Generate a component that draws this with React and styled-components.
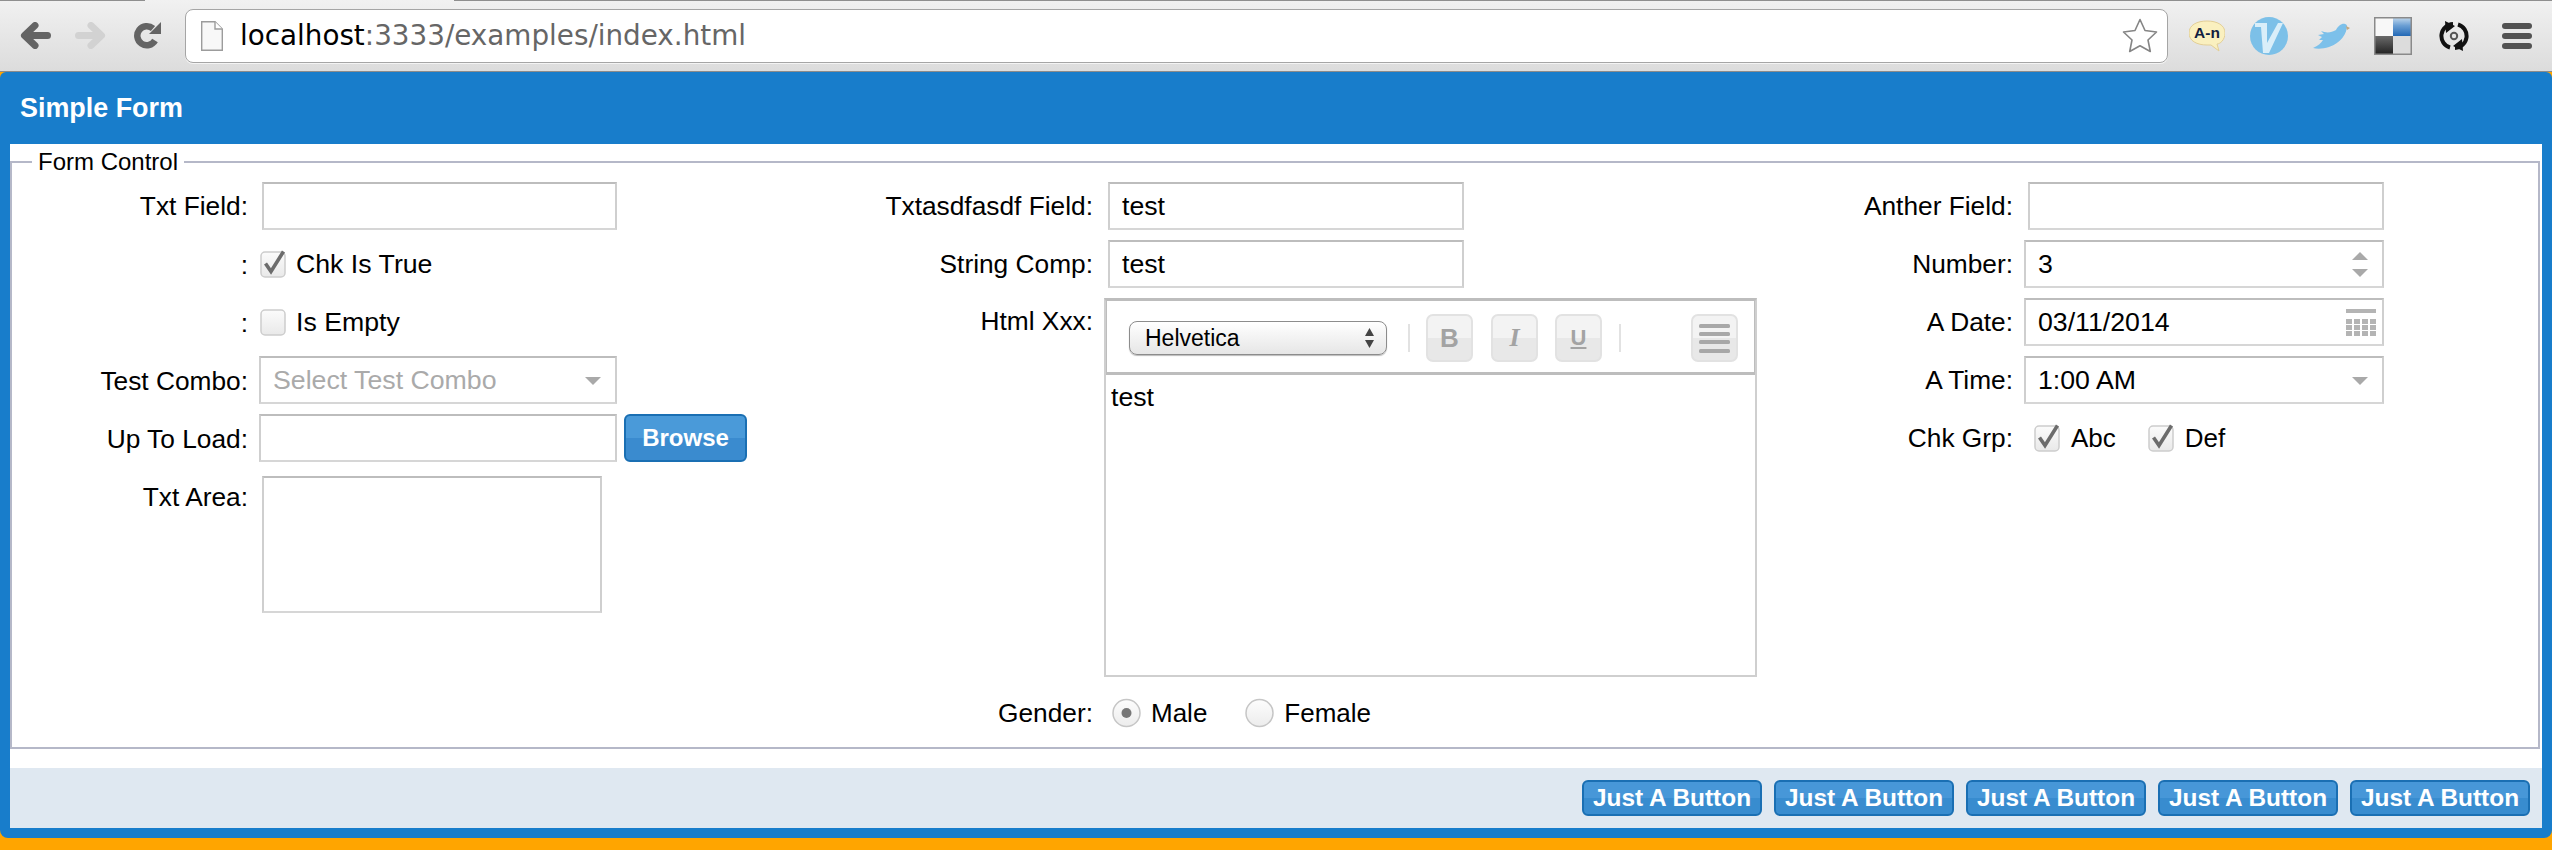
import styled, { createGlobalStyle } from "styled-components";

const GlobalStyle = createGlobalStyle`
  html, body {
    margin: 0;
    padding: 0;
    background: #ffa500;
    font-family: "Liberation Sans", Arial, sans-serif;
    font-size: 26.7px;
    color: #000;
  }
  * {
    box-sizing: border-box;
  }
`;

const Page = styled.div`
  display: flex;
  flex-direction: column;
  height: 850px;
  overflow: hidden;
`;

const BrowserBar = styled.div`
  display: flex;
  align-items: center;
  flex: 0 0 72px;
  padding: 0 20px;
  border-bottom: 1px solid #8b8b8b;
  background:
    linear-gradient(to right, #8f8f8f 145px, transparent 145px, transparent 454px, #8f8f8f 454px) top / 100% 1px no-repeat,
    linear-gradient(#f1f1f1, #dcdcdc);
`;

const Tool = styled.svg`
  flex: none;
  display: block;
  margin-left: ${(props) => props.$left || 0}px;
`;

const Omnibox = styled.div`
  display: flex;
  align-items: center;
  flex: 1;
  height: 54px;
  margin-left: 24px;
  padding: 0 9px 0 15px;
  background: #fff;
  border: 1px solid #a5a5a5;
  border-radius: 8px;
  box-shadow: 0 1px 0 #f4f4f4;
`;

const Url = styled.div`
  flex: 1;
  margin-left: 17px;
  font-family: "DejaVu Sans", sans-serif;
  font-size: 27.8px;
  color: #666;
  white-space: nowrap;

  > b {
    font-weight: 400;
    color: #000;
  }
`;

const Panel = styled.div`
  flex: 0 0 766px;
  display: flex;
  flex-direction: column;
  padding: 0 10px 10px;
  background: #187dcb;
  border-radius: 6px 6px 8px 8px;
`;

const PanelTitle = styled.div`
  flex: 0 0 72px;
  padding: 1px 0 0 10px;
  color: #fff;
  font-size: 26.9px;
  font-weight: 700;
  line-height: 71px;
`;

const PanelBody = styled.div`
  flex: 1;
  display: flex;
  flex-direction: column;
  background: #fff;
`;

const FormSet = styled.fieldset`
  margin: 0 2px 19px 0;
  padding: 2px 0 10px;
  min-width: 0;
  border: 2px solid #b5b8c8;

  > legend {
    margin-left: 20px;
    padding: 0 6px;
    font-size: 24px;
    line-height: 36px;
  }
`;

const Columns = styled.div`
  display: grid;
  grid-template-columns: 852px 921px 1fr;
`;

const Column = styled.div`
  display: flex;
  flex-direction: column;
  gap: 10px;
`;

const Row = styled.div`
  display: flex;
  align-items: ${(props) => (props.$top ? "flex-start" : "center")};
  min-height: 48px;
  margin-top: ${(props) => props.$gap || 0}px;
`;

const Label = styled.label`
  flex: none;
  width: ${(props) => props.$width}px;
  height: 48px;
  margin-right: 11px;
  font-size: 26.3px;
  text-align: right;
  white-space: nowrap;
  line-height: ${(props) => props.$line || 48}px;
`;

const Field = styled.div`
  display: flex;
  align-items: center;
  justify-content: space-between;
  width: ${(props) => props.$width}px;
  height: 48px;
  margin-left: ${(props) => props.$inset || 0}px;
  padding: 1px ${(props) => props.$right || 14}px 0 12px;
  background: #fff;
  border: 2px solid #cfcfcf;
  border-top-color: #bdbdbd;
  border-bottom-color: #d6d6d6;
  color: ${(props) => (props.$muted ? "#aaa" : "#000")};
  white-space: nowrap;
`;

const TextArea = styled(Field)`
  height: 137px;
`;

const Browse = styled.button`
  width: 123px;
  height: 48px;
  margin-left: 7px;
  padding: 0;
  font: 700 24px "Liberation Sans", Arial, sans-serif;
  color: #fff;
  background: linear-gradient(#4a9ad9 0 50%, #3a8bcf 50% 100%);
  border: 2px solid #1a6fb3;
  border-radius: 6px;
`;

const Editor = styled.div`
  display: flex;
  flex-direction: column;
  width: 653px;
  height: 379px;
  background: #fff;
  border: 2px solid #cfcfcf;
  border-top: 3px solid #bdbdbd;
`;

const EditorBar = styled.div`
  display: flex;
  align-items: center;
  flex: 0 0 74px;
  padding: 3px 0 0 22px;
  border-bottom: 3px solid #bdbdbd;
  border-left: 1px solid #bdbdbd;
  border-right: 1px solid #bdbdbd;
`;

const FontPicker = styled.div`
  display: flex;
  align-items: center;
  justify-content: space-between;
  width: 258px;
  height: 34px;
  padding: 0 12px 0 15px;
  font-size: 23px;
  background: linear-gradient(#fff, #e6e6e6);
  border: 1px solid #8c8c8c;
  border-radius: 8px;
  box-shadow: 0 1px 1px #bbb;
`;

const BarGap = styled.span`
  width: 2px;
  height: 28px;
  margin: 0 ${(props) => props.$after}px 0 ${(props) => props.$before}px;
  background: #e2e2e2;
`;

const BarButton = styled.div`
  display: flex;
  align-items: center;
  justify-content: center;
  width: 47px;
  height: 48px;
  margin-right: ${(props) => props.$gap || 0}px;
  color: #a3a3a3;
  font: ${(props) => props.$font};
  text-decoration: ${(props) => (props.$under ? "underline" : "none")};
  background: linear-gradient(#f3f3f3 0 50%, #e8e8e8 50% 100%);
  border: 2px solid #e2e2e2;
  border-radius: 7px;
`;

const EditorText = styled.div`
  padding: 7px 5px;
  line-height: 30px;
`;

const Option = styled.div`
  display: flex;
  align-items: center;
  gap: ${(props) => props.$gap || 9}px;
  margin-left: ${(props) => props.$left || 0}px;
  font-size: ${(props) => props.$size || 26.7}px;
  white-space: nowrap;
`;

const Footer = styled.div`
  flex: 1;
  display: flex;
  align-items: center;
  justify-content: flex-end;
  gap: 12px;
  padding-right: 12px;
  background: #dfe8f1;
`;

const FooterButton = styled.button`
  width: 180px;
  height: 36px;
  padding: 0;
  font: 700 24.4px/32px "Liberation Sans", Arial, sans-serif;
  color: #fff;
  background: linear-gradient(#4797d8 0 50%, #388ccf 50% 100%);
  border: 2px solid #1a6fb3;
  border-radius: 6px;
`;

const ComboArrow = () => (
  <svg width="16" height="8" viewBox="0 0 16 8">
    <path d="M0 0H16L8 8Z" fill="#a9a9a9" />
  </svg>
);

const SpinArrows = () => (
  <svg width="16" height="26" viewBox="0 0 16 26">
    <path d="M8 0L16 8H0Z" fill="#a9a9a9" />
    <path d="M0 17H16L8 25Z" fill="#a9a9a9" />
  </svg>
);

const CalendarIcon = () => {
  const cells = [];
  [10, 16, 22].forEach((y) =>
    [0, 8, 16, 24].forEach((x) => cells.push(<rect key={`${x}-${y}`} x={x} y={y} width="6" height="5" />))
  );
  return (
    <svg width="30" height="28" viewBox="0 0 30 28" fill="#b4b4b4">
      <rect x="0" y="0" width="30" height="4" />
      {cells}
    </svg>
  );
};

const CheckBox = ({ checked }) => (
  <svg width="27" height="28" viewBox="0 0 27 28">
    <defs>
      <linearGradient id="box" x1="0" y1="0" x2="0" y2="1">
        <stop offset="0" stopColor="#fbfbfb" />
        <stop offset="1" stopColor="#e9e9e9" />
      </linearGradient>
    </defs>
    <rect x="1" y="2" width="24" height="25" rx="4" fill="url(#box)" stroke="#cdcdcd" strokeWidth="1.5" />
    {checked && <path d="M5.5 13.5L11 21.5L23.5 1.5" fill="none" stroke="#6c6c6c" strokeWidth="3.6" />}
  </svg>
);

const RadioDot = ({ checked }) => (
  <svg width="29" height="30" viewBox="0 0 29 30">
    <defs>
      <linearGradient id="radio" x1="0" y1="0" x2="0" y2="1">
        <stop offset="0" stopColor="#fdfdfd" />
        <stop offset="1" stopColor="#ececec" />
      </linearGradient>
    </defs>
    <circle cx="14.5" cy="15" r="13.5" fill="url(#radio)" stroke="#c6c6c6" strokeWidth="1.5" />
    {checked && <circle cx="14.5" cy="15" r="5" fill="#777" />}
  </svg>
);

const UpDown = () => (
  <svg width="9" height="20" viewBox="0 0 9 20" fill="#444">
    <path d="M4.5 0L9 8H0Z" />
    <path d="M0 12H9L4.5 20Z" />
  </svg>
);

const JustifyIcon = () => (
  <svg width="31" height="29" viewBox="0 0 31 29" fill="#a8a8a8">
    <rect y="0" width="31" height="4" rx="1.5" />
    <rect y="8" width="31" height="4" rx="1.5" />
    <rect y="16" width="31" height="4" rx="1.5" />
    <rect y="25" width="31" height="4" rx="1.5" />
  </svg>
);

const App = () => {
  return (
    <Page>
      <GlobalStyle />
      <BrowserBar>
        <Tool width="31" height="27" viewBox="0 0 31 27">
          <path d="M27.5 13.5H7M15 3.5L4.5 13.5L15 23.5" fill="none" stroke="#646464" strokeWidth="7" strokeLinecap="round" strokeLinejoin="round" />
        </Tool>
        <Tool $left="24" width="31" height="27" viewBox="0 0 31 27">
          <path d="M3.5 13.5H24M16 3.5L26.5 13.5L16 23.5" fill="none" stroke="#d2d2d2" strokeWidth="7" strokeLinecap="round" strokeLinejoin="round" />
        </Tool>
        <Tool $left="28" width="27" height="27" viewBox="0 0 27 27">
          <path d="M21 18.5A9.5 9.5 0 1 1 19 6.5" fill="none" stroke="#646464" strokeWidth="6.5" />
          <path d="M27 0V12H15Z" fill="#646464" />
        </Tool>
        <Omnibox>
          <svg width="22" height="30" viewBox="0 0 22 30">
            <path d="M.7.7H14L21.3 8V29.3H.7Z" fill="#f8f8f8" stroke="#9c9c9c" strokeWidth="1.4" />
            <path d="M14 .7V8H21.3" fill="#fff" stroke="#9c9c9c" strokeWidth="1.4" />
          </svg>
          <Url>
            <b>localhost</b>:3333/examples/index.html
          </Url>
          <svg width="36" height="35" viewBox="0 0 36 35">
            <path d="M18 1.5L23 12.5L34.5 14L26 22L28.3 33.5L18 27.7L7.7 33.5L10 22L1.5 14L13 12.5Z" fill="#fff" stroke="#858585" strokeWidth="1.6" strokeLinejoin="round" />
          </svg>
        </Omnibox>
        <Tool $left="21" width="36" height="32" viewBox="0 0 36 32">
          <path d="M18 1C28 1 36 5 36 13C36 20 31 24 28 24L30 31L22 25H18C8 25 0 21 0 13C0 5 8 1 18 1Z" fill="#faf0bf" stroke="#e3cf96" />
          <text x="18" y="18" textAnchor="middle" fontFamily="Liberation Sans" fontSize="15.5" fontWeight="700" fill="#12213f">A-n</text>
        </Tool>
        <Tool $left="25" width="38" height="38" viewBox="0 0 38 38">
          <circle cx="19" cy="19" r="19" fill="#7cc0e8" />
          <path d="M5 6H17V26L28 6H33L19 36H13L11 10H5Z" fill="#d9eef9" />
        </Tool>
        <Tool $left="25" width="38" height="26" viewBox="0 0 38 26">
          <path d="M0 25C5 23 8 20 10 17L6 17L9 14L5 12L11 11L8 8C13 10 18 10 23 7C25 3 29 0 32 1C33 1 34 2 34 3C34 10 28 20 16 24C10 26 4 26 0 25Z" fill="#7cc0ea" />
          <path d="M33 3L37 5L34 7Z" fill="#c4a67e" />
        </Tool>
        <Tool $left="23" width="38" height="38" viewBox="0 0 38 38">
          <defs>
            <linearGradient id="deliBlue" x1="0" y1="0" x2="0" y2="1">
              <stop offset="0" stopColor="#c7dcef" />
              <stop offset="0.45" stopColor="#6b9fd4" />
              <stop offset="1" stopColor="#2268b5" />
            </linearGradient>
            <linearGradient id="deliDark" x1="0" y1="0" x2="0" y2="1">
              <stop offset="0" stopColor="#6a6a6a" />
              <stop offset="1" stopColor="#1f1f1f" />
            </linearGradient>
          </defs>
          <rect width="19" height="19" fill="#f8f8f8" />
          <rect x="19" width="19" height="19" fill="url(#deliBlue)" />
          <rect y="19" width="19" height="19" fill="url(#deliDark)" />
          <rect x="19" y="19" width="19" height="19" fill="#dcdcdc" />
          <rect x=".75" y=".75" width="36.5" height="36.5" fill="none" stroke="#8a8a8a" strokeWidth="1.5" />
        </Tool>
        <Tool $left="27" width="30" height="30" viewBox="0 0 30 30">
          <path d="M14 3A12 12 0 0 0 11 26.5M16 27A12 12 0 0 0 19 3.5" fill="none" stroke="#111" strokeWidth="4" />
          <path d="M6 0L16 5L7 12ZM24 30L14 25L23 18Z" fill="#111" />
          <circle cx="15" cy="15" r="3.2" fill="none" stroke="#555" strokeWidth="2" />
        </Tool>
        <Tool $left="33" width="30" height="26" viewBox="0 0 30 26" fill="#525252">
          <rect width="30" height="6" rx="3" />
          <rect y="10" width="30" height="6" rx="3" />
          <rect y="20" width="30" height="6" rx="3" />
        </Tool>
      </BrowserBar>
      <Panel>
        <PanelTitle>Simple Form</PanelTitle>
        <PanelBody>
          <FormSet>
            <legend>Form Control</legend>
            <Columns>
              <Column>
                <Row>
                  <Label $width={236}>Txt Field:</Label>
                  <Field $width={355} $inset={3} />
                </Row>
                <Row>
                  <Label $width={236} $line={50}>:</Label>
                  <Option $left={1}>
                    <CheckBox checked />
                    Chk Is True
                  </Option>
                </Row>
                <Row>
                  <Label $width={236} $line={50}>:</Label>
                  <Option $left={1}>
                    <CheckBox />
                    Is Empty
                  </Option>
                </Row>
                <Row>
                  <Label $width={236} $line={50}>Test Combo:</Label>
                  <Field $width={358} $muted>
                    Select Test Combo
                    <ComboArrow />
                  </Field>
                </Row>
                <Row>
                  <Label $width={236} $line={50}>Up To Load:</Label>
                  <Field $width={358} />
                  <Browse>Browse</Browse>
                </Row>
                <Row $top $gap={4}>
                  <Label $width={236} $line={42}>Txt Area:</Label>
                  <TextArea $width={340} $inset={3} />
                </Row>
              </Column>
              <Column>
                <Row>
                  <Label $width={229}>Txtasdfasdf Field:</Label>
                  <Field $width={356} $inset={4}>test</Field>
                </Row>
                <Row>
                  <Label $width={229}>String Comp:</Label>
                  <Field $width={356} $inset={4}>test</Field>
                </Row>
                <Row $top>
                  <Label $width={229} $line={46}>Html Xxx:</Label>
                  <Editor>
                    <EditorBar>
                      <FontPicker>
                        Helvetica
                        <UpDown />
                      </FontPicker>
                      <BarGap $before={21} $after={16} />
                      <BarButton $gap={18} $font={'700 26px "Liberation Sans", sans-serif'}>B</BarButton>
                      <BarButton $gap={17} $font={'italic 700 26px "Liberation Serif", serif'}>I</BarButton>
                      <BarButton $under $font={'700 22px "Liberation Sans", sans-serif'}>U</BarButton>
                      <BarGap $before={17} $after={70} />
                      <BarButton>
                        <JustifyIcon />
                      </BarButton>
                    </EditorBar>
                    <EditorText>test</EditorText>
                  </Editor>
                </Row>
                <Row $gap={2}>
                  <Label $width={229}>Gender:</Label>
                  <Option $left={8} $gap={10} $size={26}>
                    <RadioDot checked />
                    Male
                  </Option>
                  <Option $left={38} $gap={10} $size={26}>
                    <RadioDot />
                    Female
                  </Option>
                </Row>
              </Column>
              <Column>
                <Row>
                  <Label $width={228}>Anther Field:</Label>
                  <Field $width={356} $inset={4} />
                </Row>
                <Row>
                  <Label $width={228}>Number:</Label>
                  <Field $width={360}>
                    3
                    <SpinArrows />
                  </Field>
                </Row>
                <Row>
                  <Label $width={228}>A Date:</Label>
                  <Field $width={360} $right={6}>
                    03/11/2014
                    <CalendarIcon />
                  </Field>
                </Row>
                <Row>
                  <Label $width={228}>A Time:</Label>
                  <Field $width={360}>
                    1:00 AM
                    <ComboArrow />
                  </Field>
                </Row>
                <Row>
                  <Label $width={228}>Chk Grp:</Label>
                  <Option $left={10} $gap={10} $size={26}>
                    <CheckBox checked />
                    Abc
                  </Option>
                  <Option $left={32} $gap={10} $size={26}>
                    <CheckBox checked />
                    Def
                  </Option>
                </Row>
              </Column>
            </Columns>
          </FormSet>
          <Footer>
            {[0, 1, 2, 3, 4].map((n) => (
              <FooterButton key={n}>Just A Button</FooterButton>
            ))}
          </Footer>
        </PanelBody>
      </Panel>
    </Page>
  );
};

export default App;
